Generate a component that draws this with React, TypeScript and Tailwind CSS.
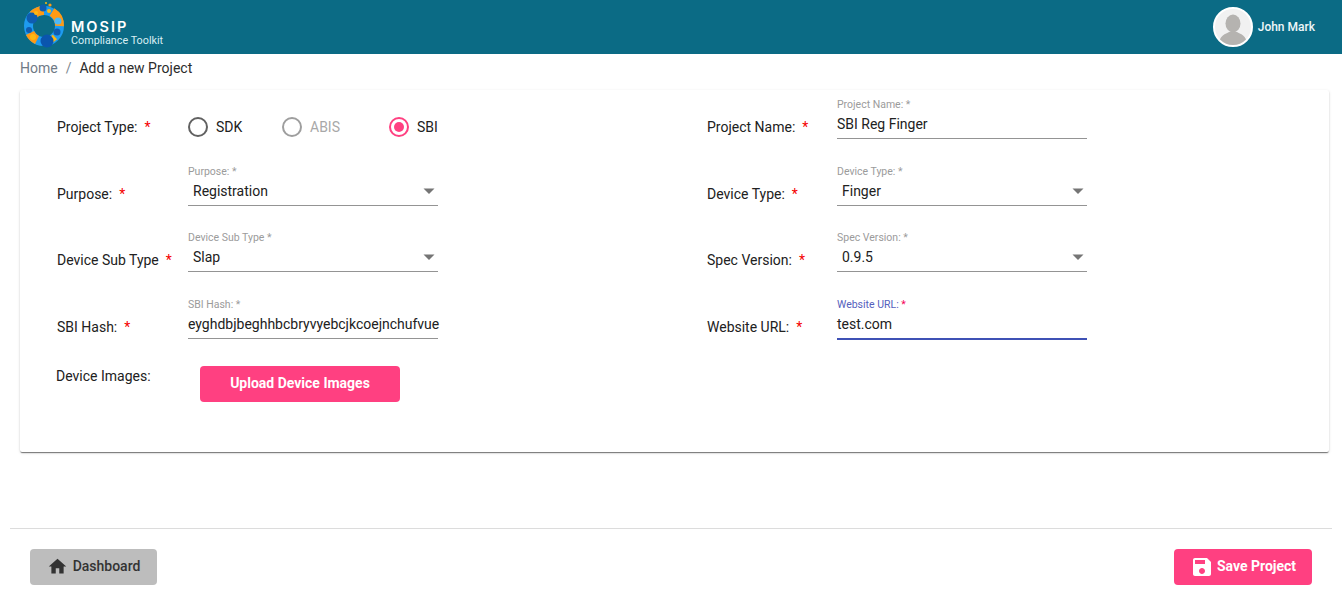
import type { ReactNode } from "react";

const PINK = "bg-[#ff4081]";

function Logo() {
  return (
    <svg width="44" height="48" viewBox="0 0 44 48" className="shrink-0 mb-[6px]">
      <circle cx="22" cy="26" r="15.5" fill="none" stroke="#1e9bf0" strokeWidth="9" />
      <path d="M11 15 A15.5 15.5 0 0 1 22 10.5" fill="none" stroke="#ff9a14" strokeWidth="9" />
      <path d="M30 12 A15.5 15.5 0 0 1 37.5 26" fill="none" stroke="#ff9a14" strokeWidth="9" />
      <path d="M8 33 A15.5 15.5 0 0 0 15 40" fill="none" stroke="#ff9a14" strokeWidth="9" />
      <path d="M33 37 A15.5 15.5 0 0 1 26 41" fill="none" stroke="#fdb813" strokeWidth="6" />
      <circle cx="10" cy="18" r="5.5" fill="#0f5cb0" />
      <circle cx="7" cy="30" r="3" fill="#0f5cb0" />
      <circle cx="11" cy="37" r="3" fill="#fdb813" />
      <circle cx="25" cy="41" r="6.5" fill="#0b55ad" />
      <circle cx="35" cy="32" r="3.5" fill="#0f5cb0" />
      <circle cx="36" cy="21" r="3.5" fill="#4db8f5" />
      <circle cx="21" cy="8" r="3.5" fill="#0f5cb0" />
      <circle cx="27" cy="11" r="2" fill="#fdb813" />
      <circle cx="28" cy="5" r="1.6" fill="#ff9a14" />
      <circle cx="24" cy="3" r="1" fill="#fdb813" />
      <circle cx="14" cy="13" r="2" fill="#fdb813" />
    </svg>
  );
}

function Avatar() {
  return (
    <div className="w-[40px] h-[40px] rounded-full border-2 border-white bg-[#f1f1f1] overflow-hidden">
      <svg width="36" height="36" viewBox="0 0 36 36">
        <ellipse cx="18" cy="14.5" rx="7.5" ry="9" fill="#b5b3b0" />
        <path d="M4 36 C4 26 11 25 14 23 L22 23 C25 25 32 26 32 36 Z" fill="#b5b3b0" />
      </svg>
    </div>
  );
}

function Label({ text, className = "" }: { text: string; className?: string }) {
  return (
    <div className={`w-[130px] shrink-0 text-[14px] leading-[21px] text-[#212121] whitespace-nowrap ${className}`}>
      {text}
      <span className="text-[#f50000] ml-[7px]">*</span>
    </div>
  );
}

function Field({
  label,
  value,
  select,
  focused,
}: {
  label: string;
  value: string;
  select?: boolean;
  focused?: boolean;
}) {
  return (
    <div
      className={`w-[250px] flex flex-col ${
        focused ? "h-[43px] mb-[-1px] border-b-2 border-[#3f51b5]" : "h-[42px] border-b border-[#949494]"
      }`}
    >
      <div className={`pt-[1px] text-[10.5px] leading-[14px] ${focused ? "text-[#5560bd]" : "text-[#9b9b9b]"}`}>
        {label}
        {focused ? <span className="text-[#f50057]"> *</span> : " *"}
      </div>
      <div
        className={`flex items-center justify-between h-[20px] mt-[2px] text-[14px] leading-[20px] text-[#212121] whitespace-nowrap ${
          select ? "pl-[5px]" : ""
        }`}
      >
        <span>{value}</span>
        {select && (
          <svg width="20" height="20" viewBox="0 0 20 20" className="shrink-0 mr-[-1px]">
            <path d="M4.5 7.5h11l-5.5 5.5z" fill="#757575" />
          </svg>
        )}
      </div>
    </div>
  );
}

function Radio({ text, state, width }: { text: string; state: "off" | "disabled" | "on"; width: string }) {
  const ring =
    state === "on" ? "border-[#ff4081]" : state === "disabled" ? "border-[#9e9e9e]" : "border-[#616161]";
  return (
    <div className={`flex items-center gap-[8px] ${width}`}>
      <div className={`w-[20px] h-[20px] rounded-full border-2 flex items-center justify-center ${ring}`}>
        {state === "on" && <div className="w-[10px] h-[10px] rounded-full bg-[#ff4081]" />}
      </div>
      <span className={`text-[14px] ${state === "disabled" ? "text-[#a8a8a8]" : "text-[#212121]"}`}>{text}</span>
    </div>
  );
}

function Row({ children }: { children: ReactNode }) {
  return <div className="h-[66.5px] flex items-end">{children}</div>;
}

function FieldRow({
  caption,
  label,
  value,
  select,
  focused,
  wide,
}: {
  caption: string;
  label: string;
  value: string;
  select?: boolean;
  focused?: boolean;
  wide?: boolean;
}) {
  return (
    <div className="flex items-end">
      <Label text={caption} className={wide ? "w-[131px] pb-[1px]" : "pb-[1px]"} />
      <Field label={label} value={value} select={select} focused={focused} />
    </div>
  );
}

export default function App() {
  return (
    <div className="w-[1342px] h-[603px] overflow-hidden bg-white font-['Roboto',sans-serif] flex flex-col">
      {/* Header */}
      <header className="h-[54px] shrink-0 bg-[#0b6b85] flex items-center justify-between pl-[22px] pr-[27px]">
        <div className="flex items-center gap-[5px]">
          <Logo />
          <div className="text-white pt-[13px]">
            <div className="text-[14.5px] leading-[15px] font-semibold tracking-[2px] font-['Inter',sans-serif]">MOSIP</div>
            <div className="text-[10.8px] leading-[14px] text-[#d8eef3]">Compliance Toolkit</div>
          </div>
        </div>
        <div className="flex items-center gap-[5px]">
          <Avatar />
          <span className="text-[12px] font-medium text-[#eef7f9]">John Mark</span>
        </div>
      </header>

      {/* Breadcrumb */}
      <div className="h-[36px] shrink-0 pl-[20px] pt-[4px] flex items-start text-[14px] leading-[20px]">
        <span className="text-[#6f7a86]">Home</span>
        <span className="text-[#7d8790] mx-[8px]">/</span>
        <span className="text-[#2b2b2b]">Add a new Project</span>
      </div>

      {/* Form card */}
      <div className="ml-[20px] mr-[13px] h-[362px] shrink-0 rounded-[2px] bg-white shadow-[0_2px_1px_-1px_rgba(0,0,0,0.35),0_1px_1px_0_rgba(0,0,0,0.2),0_1px_3px_0_rgba(0,0,0,0.15)] pl-[37px] flex">
        <div className="w-[650px] shrink-0">
          <div className="h-[49px] flex items-end">
            <div className="flex items-center h-[28px] mb-[-2px]">
              <Label text="Project Type:" className="w-[131px]" />
              <Radio text="SDK" state="off" width="w-[94px]" />
              <Radio text="ABIS" state="disabled" width="w-[107px]" />
              <Radio text="SBI" state="on" width="w-[49px]" />
            </div>
          </div>
          <Row>
            <FieldRow caption="Purpose:" label="Purpose:" value="Registration" select wide />
          </Row>
          <Row>
            <FieldRow caption="Device Sub Type" label="Device Sub Type" value="Slap" select wide />
          </Row>
          <Row>
            <FieldRow caption="SBI Hash:" label="SBI Hash:" value="eyghdbjbeghhbcbryvyebcjkcoejnchufvue" wide />
          </Row>
          <div className="flex items-start mt-[27px]">
            <div className="w-[144px] ml-[-1px] text-[14px] leading-[20px] text-[#212121]">Device Images:</div>
            <button className={`w-[200px] h-[36px] rounded-[4px] ${PINK} text-white text-[14px] font-bold`}>
              Upload Device Images
            </button>
          </div>
        </div>

        <div className="w-[380px] shrink-0">
          <div className="h-[49px] flex items-end">
            <FieldRow caption="Project Name:" label="Project Name:" value="SBI Reg Finger" />
          </div>
          <Row>
            <FieldRow caption="Device Type:" label="Device Type:" value="Finger" select />
          </Row>
          <Row>
            <FieldRow caption="Spec Version:" label="Spec Version:" value="0.9.5" select />
          </Row>
          <Row>
            <FieldRow caption="Website URL:" label="Website URL:" value="test.com" focused />
          </Row>
        </div>
      </div>

      {/* Footer */}
      <div className="mt-[76px] mx-[10px] border-t border-[#dcdcdc] pt-[20px] px-[20px] flex justify-between">
        <button className="w-[127px] h-[36px] rounded-[4px] bg-[#bdbdbd] flex items-center justify-center gap-[5px] text-[14px] font-medium text-[#333333]">
          <svg width="21" height="21" viewBox="0 0 24 24" className="mb-[2px]">
            <path d="M10 20v-6h4v6h5v-8h3L12 3 2 12h3v8z" fill="#333333" />
          </svg>
          <span className="pb-[1px]">Dashboard</span>
        </button>
        <button className={`w-[138px] h-[36px] rounded-[4px] ${PINK} flex items-center justify-center gap-[3px] text-[14px] font-bold text-white`}>
          <svg width="24" height="24" viewBox="0 0 24 24">
            <path
              d="M17 3H5c-1.11 0-2 .9-2 2v14c0 1.1.89 2 2 2h14c1.1 0 2-.9 2-2V7l-4-4zm-5 16c-1.66 0-3-1.34-3-3s1.34-3 3-3 3 1.34 3 3-1.34 3-3 3zm3-10H5V5h10v4z"
              fill="#ffffff"
            />
          </svg>
          <span className="pb-[1px]">Save Project</span>
        </button>
      </div>
    </div>
  );
}
